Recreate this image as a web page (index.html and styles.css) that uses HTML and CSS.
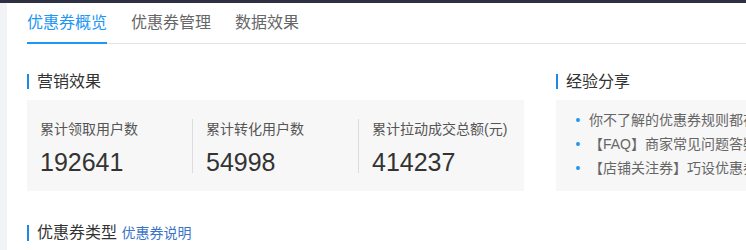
FILE: index.html
```html
<!DOCTYPE html>
<html lang="zh-CN">
<head>
  <meta charset="UTF-8" />
  <meta name="viewport" content="width=device-width, initial-scale=1.0"/>
  <title>优惠券概览</title>
  <link rel="stylesheet" href="styles.css">
</head>
<body>
  <div class="topbar"></div>
  <div class="page">
    <div class="content">
      <div class="tabs">
        <a href="#" class="tab active">优惠券概览</a>
        <a href="#" class="tab">优惠券管理</a>
        <a href="#" class="tab">数据效果</a>
      </div>

      <div class="overview-row">
        <div class="effect">
          <h3 class="section-title">营销效果</h3>
          <div class="stats">
            <div class="stat">
              <div class="stat-label">累计领取用户数</div>
              <div class="stat-num">192641</div>
            </div>
            <div class="stat">
              <div class="stat-label">累计转化用户数</div>
              <div class="stat-num">54998</div>
            </div>
            <div class="stat">
              <div class="stat-label">累计拉动成交总额(元)</div>
              <div class="stat-num">414237</div>
            </div>
          </div>
        </div>

        <div class="share">
          <h3 class="section-title">经验分享</h3>
          <ul class="share-list">
            <li><a href="#">你不了解的优惠券规则都在这里</a></li>
            <li><a href="#">【FAQ】商家常见问题答疑汇总</a></li>
            <li><a href="#">【店铺关注券】巧设优惠券提升粉丝</a></li>
          </ul>
        </div>
      </div>

      <h3 class="section-title type-title">优惠券类型 <a href="#" class="title-link">优惠券说明</a></h3>
    </div>
  </div>
</body>
</html>
```

FILE: styles.css
```css
body {
  margin: 0;
  background: #f2f3f7;
  font-family: "Liberation Sans", "Noto Sans CJK SC", sans-serif;
  color: #333;
  height: 250px;
  overflow: hidden;
}

a {
  text-decoration: none;
}

.topbar {
  height: 3px;
  background: #2f3142;
}

.page {
  margin-left: 7px;
  background: #fff;
  height: 247px;
}

.content {
  padding-left: 20px;
  width: 900px;
}

/* tabs */
.tabs {
  display: flex;
  gap: 24px;
  border-bottom: 1px solid #e4e4e4;
  height: 40px;
}

.tab {
  font-size: 16px;
  line-height: 39px;
  color: #666;
  border-bottom: 2px solid transparent;
  margin-bottom: -1px;
}

.tab.active {
  color: #2196f3;
  border-bottom-color: #2196f3;
}

/* section titles */
.section-title {
  margin: 0;
  font-size: 16px;
  font-weight: normal;
  line-height: 15px;
  border-left: 2px solid #1e88e5;
  padding-left: 8px;
  color: #333;
}

.overview-row {
  display: flex;
  gap: 32px;
  margin-top: 30px;
}

.effect {
  width: 497px;
  flex: none;
}

.share {
  width: 300px;
  flex: none;
}

/* stats */
.stats {
  margin-top: 11px;
  display: flex;
  background: #f7f7f7;
  padding: 19px 0 18px;
}

.stat {
  flex: 1;
  padding-left: 13px;
}

.stat + .stat {
  border-left: 1px solid #dcdcdc;
}

.stat-label {
  font-size: 14px;
  line-height: 20px;
  color: #555;
}

.stat-num {
  margin-top: 13px;
  font-size: 25px;
  line-height: 21px;
  color: #333;
}

/* share list */
.share-list {
  margin: 11px 0 0;
  list-style: none;
  background: #f7f7f7;
  padding: 8px 0 11px 20px;
}

.share-list li {
  display: flex;
  align-items: center;
  gap: 9px;
  font-size: 14px;
  line-height: 24px;
  white-space: nowrap;
}

.share-list li::before {
  content: "";
  width: 4px;
  height: 4px;
  border-radius: 50%;
  background: #2196f3;
  flex: none;
}

.share-list a {
  color: #666;
}

.type-title {
  margin-top: 34px;
}

.title-link {
  font-size: 14px;
  color: #3a74c8;
}
```
